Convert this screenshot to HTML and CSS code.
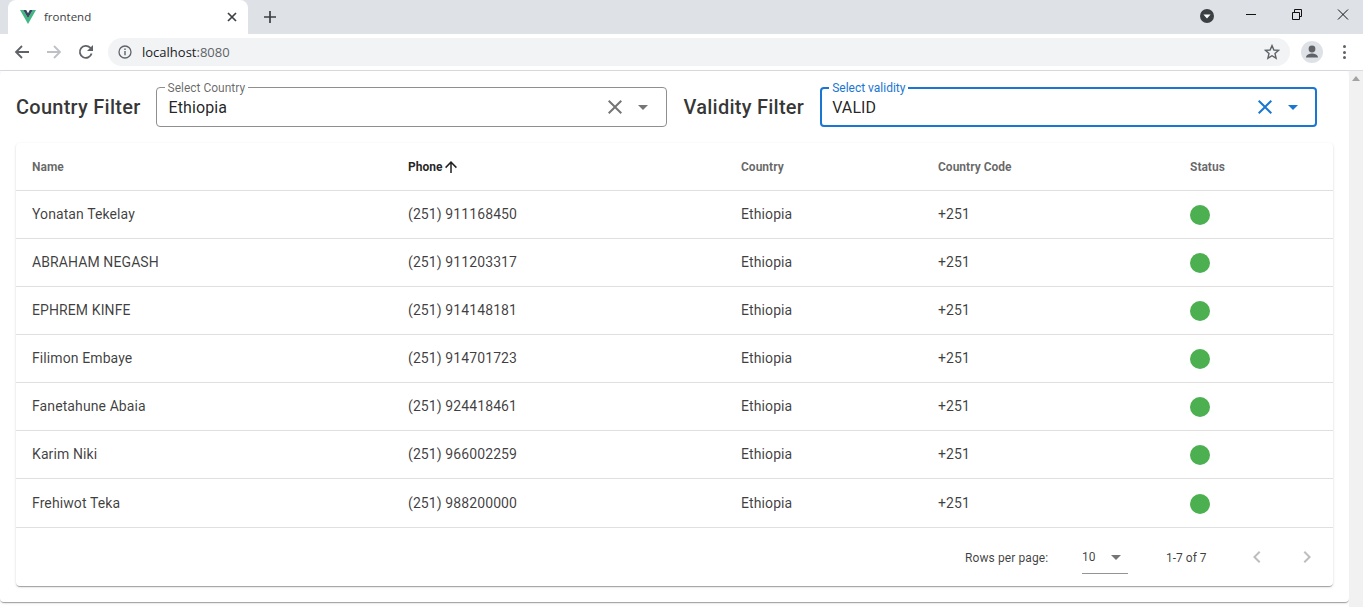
FILE: index.html
```html
<!DOCTYPE html>
<html lang="en">
<head>
<meta charset="utf-8">
<title>frontend</title>
<link rel="stylesheet" href="styles.css">
</head>
<body>
<header class="browser">
  <div class="tabstrip">
    <div class="tab">
      <svg class="favicon" viewBox="0 0 16 14"><path fill="#41b883" d="M0 0h3.2L8 8.2 12.8 0H16L8 14z"/><path fill="#35495e" d="M3.2 0h3L8 3.2 9.8 0h3L8 8.2z"/></svg>
      <span class="tab-title">frontend</span>
      <svg class="tab-close" viewBox="0 0 10 10"><path d="M1 1l8 8M9 1l-8 8" stroke="#3c4043" stroke-width="1.7" fill="none"/></svg>
    </div>
    <svg class="newtab" viewBox="0 0 12 12"><path d="M6 0v12M0 6h12" stroke="#3c4043" stroke-width="1.7" fill="none"/></svg>
    <svg class="profile-drop" viewBox="0 0 14 14"><circle cx="7" cy="7" r="7" fill="#3c4043"/><path d="M3.4 5.4h7.2L7 9.6z" fill="#fff"/></svg>
    <div class="winctl">
      <svg viewBox="0 0 46 12"><path d="M21 6.5h10" stroke="#111" fill="none"/></svg>
      <svg viewBox="0 0 46 12"><path d="M21.5 4.5h7v7h-7zM23.5 4.5v-3h7v7h-2" stroke="#111" fill="none"/></svg>
      <svg viewBox="0 0 46 12"><path d="M21 1.5l10 10M31 1.5l-10 10" stroke="#111" fill="none"/></svg>
    </div>
  </div>
  <div class="toolbar">
    <svg class="tool tool-first" viewBox="0 0 16 16"><path d="M15 8H2M8 2L2 8l6 6" stroke="#5f6368" stroke-width="1.8" fill="none"/></svg>
    <svg class="tool" viewBox="0 0 16 16"><path d="M1 8h13M8 2l6 6-6 6" stroke="#bdc1c6" stroke-width="1.8" fill="none"/></svg>
    <svg class="tool" viewBox="0 0 16 16"><path d="M13.6 9.5A6 6 0 1 1 12.2 3.7L14.5 6" stroke="#5f6368" stroke-width="1.8" fill="none"/><path d="M15 1v6H9z" fill="#5f6368"/></svg>
    <div class="omnibox">
      <svg class="info" viewBox="0 0 14 14"><circle cx="7" cy="7" r="6" stroke="#5f6368" stroke-width="1.3" fill="none"/><path d="M7 6v4.2M7 3.6v1.4" stroke="#5f6368" stroke-width="1.4"/></svg>
      <span class="url">localhost<span class="port">:8080</span></span>
      <svg class="star" viewBox="0 0 16 16"><path d="M8 1.6l1.9 4.4 4.7.4-3.6 3.1 1.1 4.7L8 11.7l-4.1 2.5L5 9.5 1.4 6.4l4.7-.4z" stroke="#5f6368" stroke-width="1.4" fill="none"/></svg>
    </div>
    <div class="avatar"><svg viewBox="0 0 22 22"><circle cx="11" cy="8" r="3.4" fill="#5f6368"/><path d="M5 16.5c0-2.6 3.6-4 6-4s6 1.4 6 4z" fill="#5f6368"/></svg></div>
    <div class="dots"><i></i><i></i><i></i></div>
  </div>
</header>
<div class="viewport">
  <main class="sheet">
    <section class="filters">
      <h2 class="filter-title">Country Filter</h2>
      <div class="select select-country">
        <label class="select-label">Select Country</label>
        <span class="select-value">Ethiopia</span>
        <svg class="clear" viewBox="0 0 24 24"><path d="M19 6.41L17.59 5 12 10.59 6.41 5 5 6.41 10.59 12 5 17.59 6.41 19 12 13.41 17.59 19 19 17.59 13.41 12z"/></svg>
        <svg class="caret" viewBox="0 0 24 24"><path d="M7 10l5 5 5-5z"/></svg>
      </div>
      <h2 class="filter-title">Validity Filter</h2>
      <div class="select select-validity">
        <label class="select-label">Select validity</label>
        <span class="select-value">VALID</span>
        <svg class="clear" viewBox="0 0 24 24"><path d="M19 6.41L17.59 5 12 10.59 6.41 5 5 6.41 10.59 12 5 17.59 6.41 19 12 13.41 17.59 19 19 17.59 13.41 12z"/></svg>
        <svg class="caret" viewBox="0 0 24 24"><path d="M7 10l5 5 5-5z"/></svg>
      </div>
    </section>
    <section class="card">
      <table class="table">
        <colgroup><col class="c1"><col class="c2"><col class="c3"><col class="c4"><col class="c5"></colgroup>
        <thead>
          <tr><th>Name</th><th class="sorted"><span class="sort-wrap">Phone<svg class="arrow" viewBox="0 0 24 24"><path d="M13 20h-2V8l-5.5 5.5-1.42-1.42L12 4.16l7.92 7.92-1.42 1.42L13 8z"/></svg></span></th><th>Country</th><th>Country Code</th><th>Status</th></tr>
        </thead>
        <tbody>
          <tr><td>Yonatan Tekelay</td><td>(251) 911168450</td><td>Ethiopia</td><td>+251</td><td><span class="dot"></span></td></tr>
          <tr><td>ABRAHAM NEGASH</td><td>(251) 911203317</td><td>Ethiopia</td><td>+251</td><td><span class="dot"></span></td></tr>
          <tr><td>EPHREM KINFE</td><td>(251) 914148181</td><td>Ethiopia</td><td>+251</td><td><span class="dot"></span></td></tr>
          <tr><td>Filimon Embaye</td><td>(251) 914701723</td><td>Ethiopia</td><td>+251</td><td><span class="dot"></span></td></tr>
          <tr><td>Fanetahune Abaia</td><td>(251) 924418461</td><td>Ethiopia</td><td>+251</td><td><span class="dot"></span></td></tr>
          <tr><td>Karim Niki</td><td>(251) 966002259</td><td>Ethiopia</td><td>+251</td><td><span class="dot"></span></td></tr>
          <tr class="row-last"><td>Frehiwot Teka</td><td>(251) 988200000</td><td>Ethiopia</td><td>+251</td><td><span class="dot"></span></td></tr>
        </tbody>
      </table>
      <footer class="pager">
        <span class="rows-label">Rows per page:</span>
        <div class="rows-select"><span>10</span><svg class="caret" viewBox="0 0 24 24"><path d="M7 10l5 5 5-5z"/></svg></div>
        <span class="range">1-7 of 7</span>
        <svg class="page-btn page-prev" viewBox="0 0 24 24"><path d="M15.41 16.58L10.83 12l4.58-4.59L14 6l-6 6 6 6z"/></svg>
        <svg class="page-btn page-next" viewBox="0 0 24 24"><path d="M8.59 16.58L13.17 12 8.59 7.41 10 6l6 6-6 6z"/></svg>
      </footer>
    </section>
  </main>
  <aside class="scrollbar"><svg class="scroll-up" viewBox="0 0 8 5"><path d="M4 0l4 5H0z" fill="#a3a3a3"/></svg></aside>
</div>
</body>
</html>
```
FILE: styles.css
```css
* { box-sizing: border-box; }
html, body { margin: 0; height: 607px; overflow: hidden; background: #fff; }
body { font-family: Roboto, sans-serif; color: rgba(0,0,0,.87); display: flex; flex-direction: column; }

/* browser chrome */
.browser { flex: none; height: 71px; border-bottom: 1px solid #dadce0; }
.tabstrip { height: 34px; background: #dee1e6; display: flex; align-items: flex-start; }
.tab { width: 240px; height: 34px; margin-left: 8px; background: #fff; border-radius: 8px 8px 0 0; display: flex; align-items: center; padding-left: 12px; }
.favicon { width: 16px; height: 14px; }
.tab-title { font: 11.5px/14px "Open Sans", sans-serif; color: #3c4043; margin: 0 0 1px 8px; flex: 1; }
.tab-close { width: 10px; height: 10px; margin-right: 11px; }
.newtab { width: 12px; height: 12px; margin: 11px 0 0 16px; }
.profile-drop { width: 14px; height: 14px; margin: 9px 0 0 924px; }
.winctl { display: flex; margin: 8px 0 0 auto; }
.winctl svg { width: 46px; height: 12px; }
.toolbar { height: 36px; display: flex; align-items: center; }
.tool { width: 16px; height: 16px; margin-left: 16px; }
.tool-first { margin-left: 14px; }
.omnibox { width: 1182px; height: 28px; margin-left: 14px; background: #f1f3f4; border-radius: 14px; display: flex; align-items: center; padding: 0 10px; }
.info { width: 14px; height: 14px; }
.url { font: 13px "Open Sans", sans-serif; color: #202124; margin-left: 10px; flex: 1; }
.port { color: #5f6368; }
.star { width: 16px; height: 16px; }
.avatar { width: 22px; height: 22px; border-radius: 50%; background: #dee1e6; margin-left: 11px; }
.avatar svg { display: block; width: 22px; height: 22px; }
.dots { display: flex; flex-direction: column; gap: 2.5px; margin-left: 20px; }
.dots i { display: block; width: 3px; height: 3px; background: #5f6368; border-radius: 50%; }

/* page */
.viewport { flex: 1; display: flex; min-height: 0; }
.sheet { width: 1349px; height: 531px; background: #fff; border-radius: 4px; box-shadow: 0 2px 1px -1px rgba(0,0,0,.2), 0 1px 1px rgba(0,0,0,.14), 0 1px 3px rgba(0,0,0,.12); padding: 16px 16px 0; }
.scrollbar { flex: 1; background: #f1f1f1; }
.scroll-up { display: block; width: 8px; height: 5px; margin: 5px 0 0 3px; }

.filters { display: flex; align-items: center; height: 40px; }
.filter-title { margin: 0; font-size: 20px; font-weight: 500; letter-spacing: .25px; line-height: 40px; color: rgba(0,0,0,.8); white-space: nowrap; }
.select { position: relative; height: 40px; display: flex; align-items: center; background: #fff; border-radius: 4px; padding-left: 12px; }
.select-country { flex: none; width: 511px; margin: 0 17px 0 15px; border: 1px solid #8f8f8f; }
.select-validity { flex: none; width: 497px; margin-left: 16px; border: 2px solid #1976d2; padding-left: 10px; }
.select-label { position: absolute; top: -6px; left: 8px; padding: 0 3px; background: #fff; font-size: 12px; line-height: 13px; color: rgba(0,0,0,.6); }
.select-validity .select-label { top: -7px; left: 7px; color: #1976d2; }
.select-value { flex: 1; font-size: 16px; line-height: 20px; letter-spacing: .1px; padding-top: 2px; }
.clear { width: 24px; height: 24px; fill: rgba(0,0,0,.54); }
.caret { width: 24px; height: 24px; fill: rgba(0,0,0,.54); }
.select .clear { margin-right: 4px; }
.select .caret { margin-right: 11px; }
.select-validity .clear, .select-validity .caret { fill: #1976d2; }
.select-validity .caret { margin-right: 10px; }

.card { margin-top: 16px; height: 443px; border-radius: 4px; background: #fff; box-shadow: 0 2px 1px -1px rgba(0,0,0,.2), 0 1px 1px rgba(0,0,0,.14), 0 1px 3px rgba(0,0,0,.12); }
.table { width: 1317px; border-collapse: separate; border-spacing: 0; table-layout: fixed; }
.c1 { width: 376px; } .c2 { width: 333px; } .c3 { width: 197px; } .c4 { width: 252px; } .c5 { width: 159px; }
th { height: 48px; padding: 0 16px; text-align: left; font-size: 12px; font-weight: 700; color: rgba(0,0,0,.6); border-bottom: 1px solid #e0e0e0; }
th.sorted { color: rgba(0,0,0,.87); }
.sort-wrap { display: inline-flex; align-items: center; }
.arrow { width: 18px; height: 18px; fill: rgba(0,0,0,.87); }
td { height: 48px; padding: 0 16px 1px; font-size: 14px; letter-spacing: .1px; color: rgba(0,0,0,.76); border-bottom: 1px solid #e0e0e0; }
.row-last td { height: 49px; }
.dot { display: block; width: 20px; height: 20px; margin-top: 2px; border-radius: 50%; background: #4caf50; }

.pager { height: 59px; display: flex; align-items: center; font-size: 12px; color: rgba(0,0,0,.76); padding: 0 0 2px 949px; }
.rows-label { width: 117px; margin-top: 2px; letter-spacing: .1px; }
.rows-select { width: 46px; height: 32px; margin-top: 2px; border-bottom: 1px solid rgba(0,0,0,.42); display: flex; align-items: center; justify-content: space-between; }
.rows-select .caret { margin-right: 0; }
.range { margin: 2px 0 0 38px; width: 41px; }
.page-btn { width: 24px; height: 24px; fill: rgba(0,0,0,.26); }
.page-prev { margin-left: 38px; }
.page-next { margin-left: 26px; }
```
